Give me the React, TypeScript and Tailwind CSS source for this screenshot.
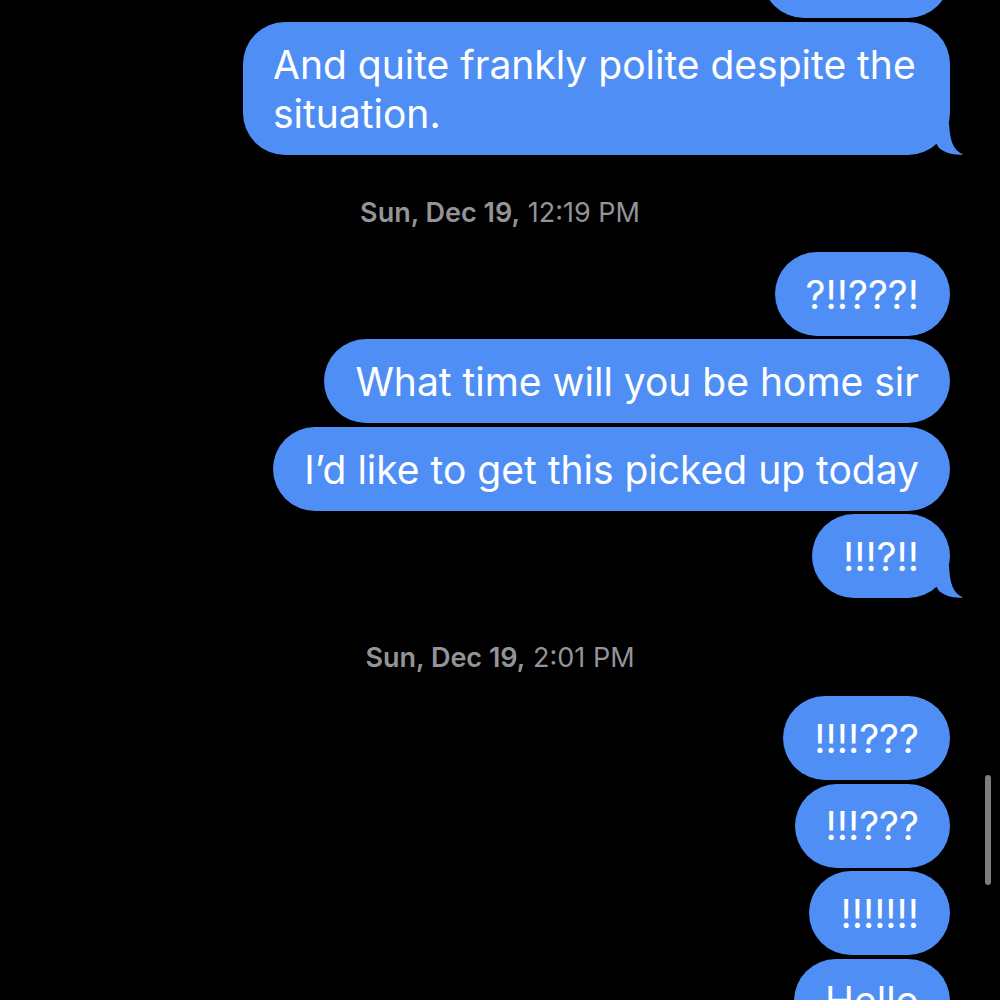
const blue = "bg-[#4f8ff5]";

interface BubbleProps {
    text: React.ReactNode
    tail?: boolean
    className?: string
}

const Tail = () => (
    <svg className="absolute right-[-14px] bottom-0" width="28" height="32" viewBox="0 0 28 32">
        <path d="M13,0 C14,18 17,27 27,31.5 C18,32.5 9,30 3,25 L0,20 L0,0 Z" fill="#4f8ff5"/>
    </svg>
)

const Bubble = ({text, tail, className}: BubbleProps) => {
    return (
        <div className={`relative ${blue} text-white rounded-[42px] px-[31px] py-[17.5px] text-[39px] leading-[49px] whitespace-nowrap ${className ?? ""}`}>
            {text}
            {tail && <Tail/>}
        </div>
    )
}

const Stamp = ({day, time, className}: { day: string, time: string, className?: string }) => (
    <div className={`w-full text-center text-[#939398] text-[27px] leading-[30px] ${className ?? ""}`}>
        <span className="font-semibold">{day}</span> {time}
    </div>
)

export default function App() {
    return (
        <div className="w-[1000px] h-[1000px] bg-black overflow-hidden relative"
             style={{fontFamily: "Inter, 'Noto Sans', sans-serif"}}>
            <div className="flex flex-col items-end pr-[50px] pl-[50px]">
                <div className={`${blue} w-[188px] h-[84px] mt-[-66px] rounded-[42px]`}/>
                <Bubble text={<>And quite frankly polite despite the<br/>situation.</>} tail
                        className="mt-[4px] w-[707px] pl-[30px] pr-[30px]"/>
                <Stamp day="Sun, Dec 19," time="12:19 PM" className="mt-[43px]"/>
                <Bubble text="?!!???!" className="mt-[24px]"/>
                <Bubble text="What time will you be home sir" className="mt-[3px]"/>
                <Bubble text="I’d like to get this picked up today" className="mt-[4px]"/>
                <Bubble text="!!!?!!" tail className="mt-[3px]"/>
                <Stamp day="Sun, Dec 19," time="2:01 PM" className="mt-[45px]"/>
                <Bubble text="!!!!???" className="mt-[23px]"/>
                <Bubble text="!!!???" className="mt-[3.5px]"/>
                <Bubble text="!!!!!!!" className="mt-[3.5px]"/>
                <Bubble text="Hello" className="mt-[3.5px]"/>
            </div>
            <div className="absolute left-[985px] top-[775px] w-[6px] h-[110px] rounded-full bg-[#7d7d7d]"/>
        </div>
    )
}
